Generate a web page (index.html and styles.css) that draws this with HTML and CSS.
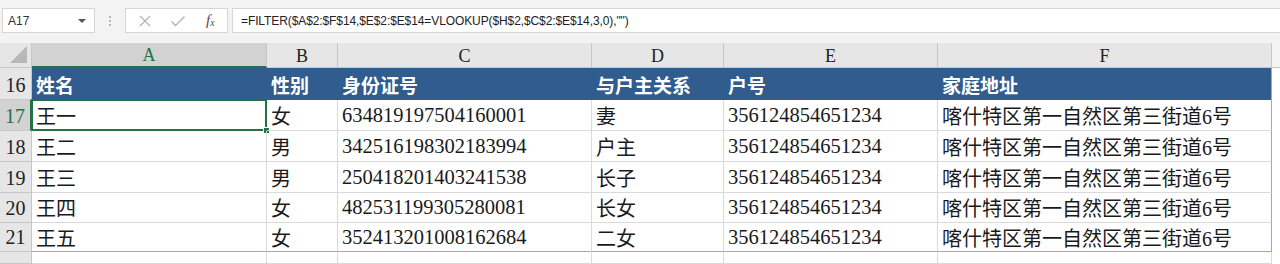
FILE: index.html
```html
<!DOCTYPE html>
<html lang="zh">
<head>
<meta charset="utf-8">
<title>Sheet</title>
<link rel="stylesheet" href="styles.css">
</head>
<body>
<div class="app">
  <div class="toolbar">
    <div class="namebox"><span>A17</span><span class="caret"></span></div>
    <div class="dots"><i></i><i></i><i></i></div>
    <div class="btns">
      <svg class="ic" width="14" height="14" viewBox="0 0 14 14"><path d="M2 2L12 12M12 2L2 12" stroke="#b3b3b3" stroke-width="1.3" fill="none"/></svg>
      <svg class="ic" width="16" height="14" viewBox="0 0 16 14"><path d="M1.5 7.5L5.5 11.5L14.5 2.5" stroke="#b3b3b3" stroke-width="1.4" fill="none"/></svg>
      <span class="fx">f<sub>x</sub></span>
    </div>
    <div class="formula">=FILTER($A$2:$F$14,$E$2:$E$14=VLOOKUP($H$2,$C$2:$E$14,3,0),"")</div>
  </div>
  <div class="gap"></div>
  <div class="sheet">
    <div class="corner"><span class="tri"></span></div>
    <div class="ch sel">A</div>
    <div class="ch">B</div>
    <div class="ch">C</div>
    <div class="ch">D</div>
    <div class="ch">E</div>
    <div class="ch last">F</div>
    <div class="edge head"></div>

    <div class="rh">16</div>
    <div class="th">姓名</div>
    <div class="th">性别</div>
    <div class="th">身份证号</div>
    <div class="th">与户主关系</div>
    <div class="th">户号</div>
    <div class="th last">家庭地址</div>
    <div class="edge"></div>

    <div class="rh sel">17</div>
    <div class="td active">王一<span class="handle"></span></div>
    <div class="td">女</div>
    <div class="td num">634819197504160001</div>
    <div class="td">妻</div>
    <div class="td num">356124854651234</div>
    <div class="td last">喀什特区第一自然区第三街道6号</div>
    <div class="edge"></div>

    <div class="rh">18</div>
    <div class="td">王二</div>
    <div class="td">男</div>
    <div class="td num">342516198302183994</div>
    <div class="td">户主</div>
    <div class="td num">356124854651234</div>
    <div class="td last">喀什特区第一自然区第三街道6号</div>
    <div class="edge"></div>

    <div class="rh">19</div>
    <div class="td">王三</div>
    <div class="td">男</div>
    <div class="td num">250418201403241538</div>
    <div class="td">长子</div>
    <div class="td num">356124854651234</div>
    <div class="td last">喀什特区第一自然区第三街道6号</div>
    <div class="edge"></div>

    <div class="rh">20</div>
    <div class="td">王四</div>
    <div class="td">女</div>
    <div class="td num">482531199305280081</div>
    <div class="td">长女</div>
    <div class="td num">356124854651234</div>
    <div class="td last">喀什特区第一自然区第三街道6号</div>
    <div class="edge"></div>

    <div class="rh">21</div>
    <div class="td bot">王五</div>
    <div class="td bot">女</div>
    <div class="td bot num">352413201008162684</div>
    <div class="td bot">二女</div>
    <div class="td bot num">356124854651234</div>
    <div class="td bot last">喀什特区第一自然区第三街道6号</div>
    <div class="edge"></div>

    <div class="rh"></div>
    <div class="td"></div>
    <div class="td"></div>
    <div class="td"></div>
    <div class="td"></div>
    <div class="td"></div>
    <div class="td"></div>
    <div class="edge"></div>
  </div>
</div>
</body>
</html>
```

FILE: styles.css
```css
* { box-sizing: border-box; margin: 0; padding: 0; }
html, body { width: 1280px; height: 264px; overflow: hidden; background: #ffffff; }
body { font-family: "Liberation Serif", "Noto Sans CJK SC", serif; }

.app { width: 1280px; height: 264px; display: flex; flex-direction: column; }

.toolbar {
  height: 41px;
  background: #f3f3f3;
  display: flex;
  align-items: flex-start;
  padding: 8px 0 0 2px;
}
.namebox {
  width: 93px; height: 25px;
  background: #fff;
  border: 1px solid #d6d6d6;
  display: flex; align-items: center; justify-content: space-between;
  padding: 0 8px 0 5px;
  font-family: "Liberation Sans", Arial, sans-serif;
  font-size: 12px; color: #333;
}
.caret {
  width: 0; height: 0;
  border-left: 4px solid transparent;
  border-right: 4px solid transparent;
  border-top: 4px solid #555;
}
.dots {
  width: 30px; height: 25px;
  display: flex; flex-direction: column; align-items: center; justify-content: center; gap: 2px;
}
.dots i { display: block; width: 2px; height: 2px; background: #b5b5b5; }
.btns {
  width: 103px; height: 25px;
  background: #fff;
  border: 1px solid #d6d6d6;
  display: flex; align-items: center;
  padding-left: 12px; gap: 18px;
}
.fx {
  font-family: "Liberation Serif", serif;
  font-style: italic; font-size: 15px; color: #505050;
  margin-left: 2px;
}
.fx sub { font-size: 10px; vertical-align: -1px; }
.formula {
  flex: 1;
  margin-left: 4px;
  height: 25px;
  background: #fff;
  border: 1px solid #d6d6d6;
  border-right: none;
  display: flex; align-items: center;
  padding-left: 8px;
  font-family: "Liberation Sans", Arial, sans-serif;
  font-size: 12px; color: #222;
  letter-spacing: -0.1px;
}
.gap { height: 2px; background: #f3f3f3; }

.sheet {
  display: grid;
  grid-template-columns: 32px 235px 71px 254px 132px 214px 334px 8px;
  grid-template-rows: 25px 32px 31px 31px 31px 30px 29px 1fr;
  flex: 1;
  background: #fff;
}
.corner {
  background: #e6e6e6;
  border-right: 1px solid #c6c6c6;
  border-bottom: 1px solid #c6c6c6;
  position: relative;
}
.tri {
  position: absolute; right: 4px; bottom: 4px;
  width: 0; height: 0;
  border-left: 17px solid transparent;
  border-bottom: 17px solid #b8b8b8;
}
.ch {
  background: #e6e6e6;
  border-right: 1px solid #c6c6c6;
  border-bottom: 1px solid #c6c6c6;
  display: flex; align-items: center; justify-content: center;
  font-size: 18px; color: #222;
  padding-top: 2px;
}
.ch.sel { background: #d2d2d2; color: #217346; border-bottom: 2px solid #217346; }
.edge { background: #fff; }
.edge.head { background: #f3f3f3; border-bottom: 1px solid #c6c6c6; }

.rh {
  background: #e6e6e6;
  border-right: 1px solid #c6c6c6;
  border-bottom: 1px solid #c6c6c6;
  display: flex; align-items: flex-end; justify-content: center;
  font-size: 20px; color: #222;
  padding-bottom: 2px;
}
.rh.sel { background: #d2d2d2; color: #217346; border-right: 2px solid #217346; }

.th {
  background: #305c8e;
  color: #fff;
  font-family: "Noto Sans CJK SC", sans-serif;
  font-weight: 700;
  font-size: 19px;
  display: flex; align-items: center;
  padding-left: 4px;
  border-right: 1px solid #305c8e;
}
.th.last { border-right: 1px solid #8eaadb; }

.td {
  border-right: 1px solid #dadada;
  border-bottom: 1px solid #dadada;
  display: flex; align-items: center;
  padding-left: 4px;
  font-size: 20px;
  color: #1a1a1a;
  white-space: nowrap;
  position: relative;
}
.td.num { font-size: 20.5px; }
.td.last { border-right: 1px solid #8eaadb; }
.td.bot { border-bottom: 1px solid #8eaadb; }
.td.active { border: 2px solid #217346; margin: -1px 0 0 -1px; padding-left: 3px; }
.handle {
  position: absolute; right: -5px; bottom: -5px;
  width: 7px; height: 7px;
  background: #217346; border: 1px solid #fff;
}
```
